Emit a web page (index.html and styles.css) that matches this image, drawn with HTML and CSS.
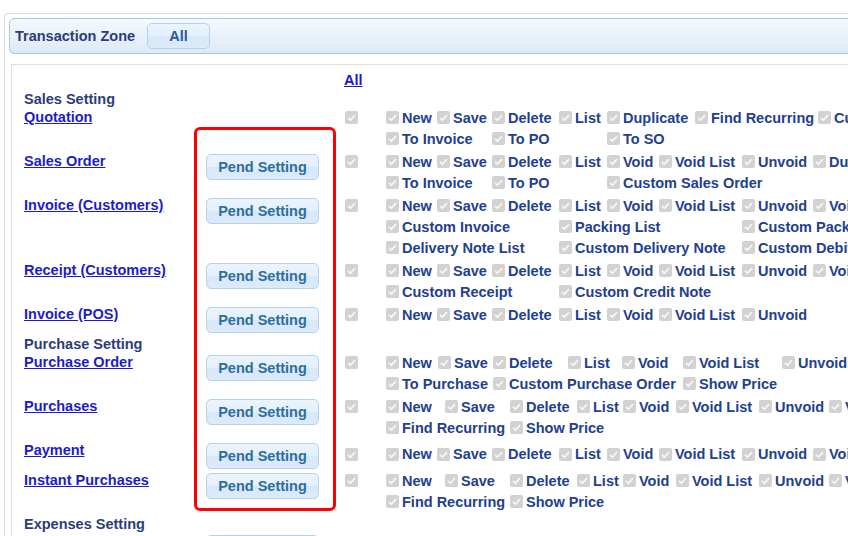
FILE: index.html
```html
<!DOCTYPE html>
<html>
<head>
<meta charset="utf-8">
<title>Transaction Zone</title>
<link rel="stylesheet" href="styles.css">
</head>
<body>
<div class="panel">
  <div class="zonebar">
    <span class="zone-title">Transaction Zone</span>
    <button class="ui-btn all-btn">All</button>
  </div>
  <div class="content">
    <div class="all-row"><a href="#" class="link">All</a></div>

    <div class="section">Sales Setting</div>
    <div class="row">
      <div class="label"><a href="#" class="link">Quotation</a></div>
      <div class="btn-cell"></div>
      <div class="main-cb"><i class="cb"></i></div>
      <div class="items g-quote">
        <span class="it"><i class="cb"></i>New</span>
        <span class="it"><i class="cb"></i>Save</span>
        <span class="it"><i class="cb"></i>Delete</span>
        <span class="it"><i class="cb"></i>List</span>
        <span class="it"><i class="cb"></i>Duplicate</span>
        <span class="it"><i class="cb"></i>Find Recurring</span>
        <span class="it"><i class="cb"></i>Custom Quotation</span>
        <span class="it nl s2"><i class="cb"></i>To Invoice</span>
        <span class="it s2"><i class="cb"></i>To PO</span>
        <span class="it"><i class="cb"></i>To SO</span>
      </div>
    </div>

    <div class="row">
      <div class="label"><a href="#" class="link">Sales Order</a></div>
      <div class="btn-cell"><button class="ui-btn pend">Pend Setting</button></div>
      <div class="main-cb"><i class="cb"></i></div>
      <div class="items g-sales">
        <span class="it"><i class="cb"></i>New</span>
        <span class="it"><i class="cb"></i>Save</span>
        <span class="it"><i class="cb"></i>Delete</span>
        <span class="it"><i class="cb"></i>List</span>
        <span class="it"><i class="cb"></i>Void</span>
        <span class="it"><i class="cb"></i>Void List</span>
        <span class="it"><i class="cb"></i>Unvoid</span>
        <span class="it"><i class="cb"></i>Duplicate</span>
        <span class="it nl s2"><i class="cb"></i>To Invoice</span>
        <span class="it s2"><i class="cb"></i>To PO</span>
        <span class="it s3"><i class="cb"></i>Custom Sales Order</span>
      </div>
    </div>

    <div class="row">
      <div class="label"><a href="#" class="link">Invoice (Customers)</a></div>
      <div class="btn-cell"><button class="ui-btn pend">Pend Setting</button></div>
      <div class="main-cb"><i class="cb"></i></div>
      <div class="items g-sales">
        <span class="it"><i class="cb"></i>New</span>
        <span class="it"><i class="cb"></i>Save</span>
        <span class="it"><i class="cb"></i>Delete</span>
        <span class="it"><i class="cb"></i>List</span>
        <span class="it"><i class="cb"></i>Void</span>
        <span class="it"><i class="cb"></i>Void List</span>
        <span class="it"><i class="cb"></i>Unvoid</span>
        <span class="it"><i class="cb"></i>Void Reason</span>
        <span class="it nl s3"><i class="cb"></i>Custom Invoice</span>
        <span class="it s3"><i class="cb"></i>Packing List</span>
        <span class="it s2"><i class="cb"></i>Custom Packing List</span>
        <span class="it nl s3"><i class="cb"></i>Delivery Note List</span>
        <span class="it s3"><i class="cb"></i>Custom Delivery Note</span>
        <span class="it s2"><i class="cb"></i>Custom Debit Note</span>
      </div>
    </div>

    <div class="row">
      <div class="label"><a href="#" class="link">Receipt (Customers)</a></div>
      <div class="btn-cell"><button class="ui-btn pend">Pend Setting</button></div>
      <div class="main-cb"><i class="cb"></i></div>
      <div class="items g-sales">
        <span class="it"><i class="cb"></i>New</span>
        <span class="it"><i class="cb"></i>Save</span>
        <span class="it"><i class="cb"></i>Delete</span>
        <span class="it"><i class="cb"></i>List</span>
        <span class="it"><i class="cb"></i>Void</span>
        <span class="it"><i class="cb"></i>Void List</span>
        <span class="it"><i class="cb"></i>Unvoid</span>
        <span class="it"><i class="cb"></i>Void Reason</span>
        <span class="it nl s3"><i class="cb"></i>Custom Receipt</span>
        <span class="it s3"><i class="cb"></i>Custom Credit Note</span>
      </div>
    </div>

    <div class="row">
      <div class="label"><a href="#" class="link">Invoice (POS)</a></div>
      <div class="btn-cell"><button class="ui-btn pend">Pend Setting</button></div>
      <div class="main-cb"><i class="cb"></i></div>
      <div class="items g-sales">
        <span class="it"><i class="cb"></i>New</span>
        <span class="it"><i class="cb"></i>Save</span>
        <span class="it"><i class="cb"></i>Delete</span>
        <span class="it"><i class="cb"></i>List</span>
        <span class="it"><i class="cb"></i>Void</span>
        <span class="it"><i class="cb"></i>Void List</span>
        <span class="it"><i class="cb"></i>Unvoid</span>
      </div>
    </div>

    <div class="section">Purchase Setting</div>
    <div class="row">
      <div class="label"><a href="#" class="link">Purchase Order</a></div>
      <div class="btn-cell"><button class="ui-btn pend">Pend Setting</button></div>
      <div class="main-cb"><i class="cb"></i></div>
      <div class="items g-po">
        <span class="it"><i class="cb"></i>New</span>
        <span class="it"><i class="cb"></i>Save</span>
        <span class="it"><i class="cb"></i>Delete</span>
        <span class="it"><i class="cb"></i>List</span>
        <span class="it"><i class="cb"></i>Void</span>
        <span class="it"><i class="cb"></i>Void List</span>
        <span class="it"><i class="cb"></i>Unvoid</span>
        <span class="it nl s2"><i class="cb"></i>To Purchase</span>
        <span class="it s3"><i class="cb"></i>Custom Purchase Order</span>
        <span class="it s2"><i class="cb"></i>Show Price</span>
      </div>
    </div>

    <div class="row">
      <div class="label"><a href="#" class="link">Purchases</a></div>
      <div class="btn-cell"><button class="ui-btn pend">Pend Setting</button></div>
      <div class="main-cb"><i class="cb"></i></div>
      <div class="items g-pur">
        <span class="it"><i class="cb"></i>New</span>
        <span class="it"><i class="cb"></i>Save</span>
        <span class="it"><i class="cb"></i>Delete</span>
        <span class="it"><i class="cb"></i>List</span>
        <span class="it"><i class="cb"></i>Void</span>
        <span class="it"><i class="cb"></i>Void List</span>
        <span class="it"><i class="cb"></i>Unvoid</span>
        <span class="it"><i class="cb"></i>Void Reason</span>
        <span class="it nl s2"><i class="cb"></i>Find Recurring</span>
        <span class="it s2"><i class="cb"></i>Show Price</span>
      </div>
    </div>

    <div class="row mid">
      <div class="label"><a href="#" class="link">Payment</a></div>
      <div class="btn-cell"><button class="ui-btn pend">Pend Setting</button></div>
      <div class="main-cb"><i class="cb"></i></div>
      <div class="items g-sales">
        <span class="it"><i class="cb"></i>New</span>
        <span class="it"><i class="cb"></i>Save</span>
        <span class="it"><i class="cb"></i>Delete</span>
        <span class="it"><i class="cb"></i>List</span>
        <span class="it"><i class="cb"></i>Void</span>
        <span class="it"><i class="cb"></i>Void List</span>
        <span class="it"><i class="cb"></i>Unvoid</span>
        <span class="it"><i class="cb"></i>Void Reason</span>
      </div>
    </div>

    <div class="row">
      <div class="label"><a href="#" class="link">Instant Purchases</a></div>
      <div class="btn-cell"><button class="ui-btn pend">Pend Setting</button></div>
      <div class="main-cb"><i class="cb"></i></div>
      <div class="items g-pur">
        <span class="it"><i class="cb"></i>New</span>
        <span class="it"><i class="cb"></i>Save</span>
        <span class="it"><i class="cb"></i>Delete</span>
        <span class="it"><i class="cb"></i>List</span>
        <span class="it"><i class="cb"></i>Void</span>
        <span class="it"><i class="cb"></i>Void List</span>
        <span class="it"><i class="cb"></i>Unvoid</span>
        <span class="it"><i class="cb"></i>Void Reason</span>
        <span class="it nl s2"><i class="cb"></i>Find Recurring</span>
        <span class="it s2"><i class="cb"></i>Show Price</span>
      </div>
    </div>

    <div class="section">Expenses Setting</div>
    <div class="row">
      <div class="label"><a href="#" class="link">Expenses</a></div>
      <div class="btn-cell"><button class="ui-btn pend">Pend Setting</button></div>
      <div class="main-cb"><i class="cb"></i></div>
      <div class="items g-sales">
        <span class="it"><i class="cb"></i>New</span>
        <span class="it"><i class="cb"></i>Save</span>
        <span class="it"><i class="cb"></i>Delete</span>
        <span class="it"><i class="cb"></i>List</span>
      </div>
    </div>
  </div>
</div>
<div class="highlight"></div>
</body>
</html>
```

FILE: styles.css
```css
html, body {
  margin: 0;
  padding: 0;
  overflow: hidden;
  background: #ffffff;
}
body {
  position: relative;
  width: 848px;
  height: 536px;
  font-family: "Liberation Sans", Arial, sans-serif;
  font-weight: bold;
  font-size: 14.5px;
  color: #22408f;
}
.panel {
  margin: 13px 0 0 4px;
  width: 1300px;
  border: 1px solid #dcdcdc;
  border-radius: 4px;
  padding: 4px 0 0 4px;
  background: #ffffff;
}
.zonebar {
  height: 34px;
  border: 1px solid #a6c9e2;
  border-radius: 5px;
  background: linear-gradient(#f4f9fd, #e9f2fa 50%, #dde9f6);
  display: flex;
  align-items: center;
  padding-left: 5px;
}
.zone-title {
  font-size: 14.5px;
  color: #2c3d7c;
}
.ui-btn {
  font-family: "Liberation Sans", Arial, sans-serif;
  font-weight: bold;
  font-size: 14.5px;
  color: #2e6e9e;
  border: 1px solid #b5d2ea;
  border-radius: 5px;
  background: linear-gradient(#eaf4fd, #e3f0fc 50%, #d7e8f9 51%, #dcebfa);
  padding: 0;
  cursor: pointer;
}
.all-btn {
  margin-left: 12px;
  width: 63px;
  height: 26px;
  color: #2a5c95;
}
.content {
  margin: 10px 0 0 2px;
  border: 1px solid #e0e0e0;
  padding: 6px 0 0 12px;
  min-height: 600px;
  background: #ffffff;
}
.all-row {
  height: 17px;
  line-height: 18px;
  padding-left: 320px;
}
.link {
  color: #1c1cc8;
  text-decoration: underline;
}
.section {
  height: 16px;
  padding-top: 2px;
  line-height: 18px;
  color: #2b3d78;
  white-space: nowrap;
}
.row {
  display: flex;
  align-items: flex-start;
}
.label {
  width: 182px;
  flex: none;
  line-height: 21px;
  padding-top: 1px;
  white-space: nowrap;
}
.btn-cell {
  width: 139px;
  flex: none;
  padding-top: 4px;
  min-height: 26px;
}
.pend {
  width: 113px;
  height: 26px;
  display: block;
}
.main-cb {
  width: 41px;
  flex: none;
  height: 21px;
  padding: 1px 0;
  display: flex;
  align-items: center;
}
.row.mid .main-cb,
.row.mid .items {
  align-self: center;
}
.items {
  flex: none;
  display: grid;
  grid-auto-rows: 21px;
  align-items: center;
  padding: 1px 0;
}
.g-sales { grid-template-columns: 51px 55px 67px 48px 52px 83px 71px 200px; }
.g-quote { grid-template-columns: 51px 55px 67px 48px 88px 123px 200px; }
.g-po { grid-template-columns: 52px 55px 75px 54px 61px 99px 200px; }
.g-pur { grid-template-columns: 59px 65px 67px 46px 53px 83px 70px 200px; }
.it {
  display: flex;
  align-items: center;
  gap: 3px;
  white-space: nowrap;
}
.nl { grid-column-start: 1; }
.s2 { grid-column-end: span 2; }
.s3 { grid-column-end: span 3; }
.cb {
  display: inline-block;
  flex: none;
  width: 13px;
  height: 13px;
  border-radius: 2px;
  background-color: #d2d2d2;
  background-image: url("data:image/svg+xml;utf8,<svg xmlns='http://www.w3.org/2000/svg' viewBox='0 0 13 13'><path d='M3 6.8 5.4 9.2 10 4.2' fill='none' stroke='%23f6f6f6' stroke-width='1.7'/></svg>");
  background-size: 13px 13px;
}
.highlight {
  position: absolute;
  left: 194px;
  top: 127px;
  width: 136px;
  height: 378px;
  border: 3px solid #ff0000;
  border-radius: 6px;
  pointer-events: none;
}
```
